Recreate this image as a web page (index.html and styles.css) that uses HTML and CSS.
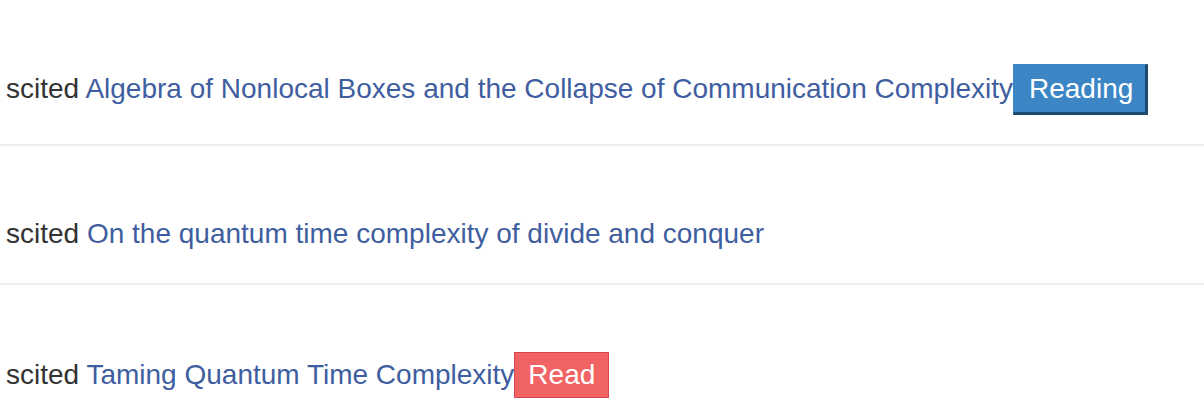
FILE: index.html
```html
<!DOCTYPE html>
<html>
<head>
<meta charset="utf-8">
<link rel="stylesheet" href="styles.css">
</head>
<body>
<ul class="feed">
  <li class="feed-row">scited <a class="paper" href="#">Algebra of Nonlocal Boxes and the Collapse of Communication Complexity</a><span class="badge badge-reading">Reading</span></li>
  <li class="feed-row feed-row-plain">scited <a class="paper" href="#">On the quantum time complexity of divide and conquer</a></li>
  <li class="feed-row feed-row-last">scited <a class="paper" href="#">Taming Quantum Time Complexity</a><span class="badge badge-read">Read</span></li>
</ul>
</body>
</html>
```

FILE: styles.css
```css
html, body {
  margin: 0;
  padding: 0;
  background: #fff;
}
body {
  font-family: "Liberation Sans", Arial, sans-serif;
  font-size: 28px;
  color: #333;
  overflow: hidden;
}
.feed {
  list-style: none;
  margin: 0;
  padding: 0;
}
.feed-row {
  padding: 64px 0 29px 6px;
  line-height: 44px;
  border-bottom: 2px solid #eeeeee;
  white-space: nowrap;
}
.feed-row-plain {
  padding-top: 66px;
  padding-bottom: 27px;
}
.feed-row-last {
  padding-top: 67px;
  border-bottom: none;
}
.paper {
  color: #3f5e9f;
  text-decoration: none;
}
.badge {
  display: inline-block;
  color: #fff;
  vertical-align: baseline;
}
.badge-reading {
  background: #3c86c6;
  line-height: 38px;
  padding: 5px 12px 4px 15px;
  border: 1px solid #3c86c6;
  border-right: 3px solid #1d4a6f;
  border-bottom: 3px solid #1d4a6f;
}
.badge-read {
  background: #f26363;
  line-height: 36px;
  padding: 4px 13px 4px 13px;
  border: 1px solid #d9434a;
}
```
